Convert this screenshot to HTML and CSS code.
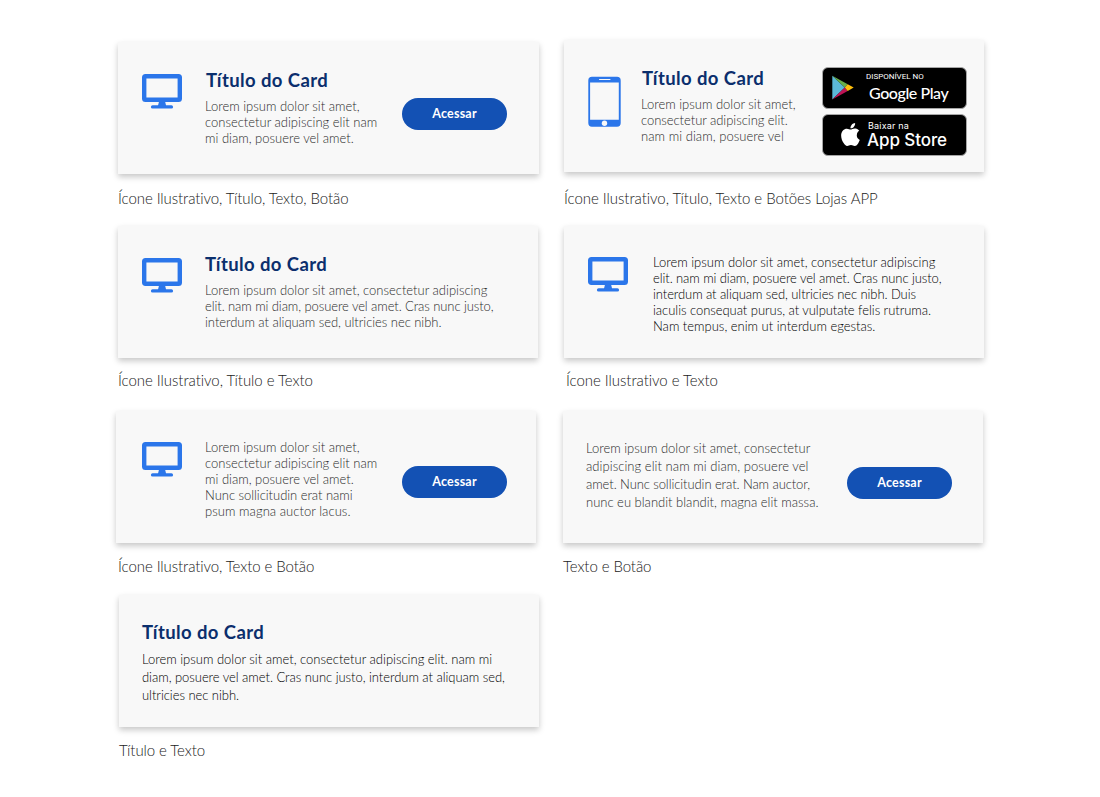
FILE: index.html
```
<!DOCTYPE html>
<html lang="pt-BR">
<head>
<meta charset="utf-8">
<title>Cards</title>
<link rel="stylesheet" href="styles.css">
</head>
<body>
<svg class="defs" aria-hidden="true">
  <symbol id="monitor" viewBox="0 0 40 36">
    <path fill="#2b76ea" fill-rule="evenodd" d="M3.500 0h33A3.500 3.500 0 0 1 40 3.500v21a3.500 3.500 0 0 1-3.500 3.500h-33A3.500 3.500 0 0 1 0 24.500v-21A3.500 3.500 0 0 1 3.500 0zM4.400 4.400v19.200h31.200V4.400zM16.900 28h6.300l.8 3.200h5.400a1.700 1.700 0 0 1 0 3.400H10.600a1.700 1.700 0 0 1 0-3.400h5.500z"/>
  </symbol>
</svg>
<main class="gallery">
  <figure class="item item-1">
    <div class="card">
      <svg class="icon"><use href="#monitor"/></svg>
      <div class="copy">
        <h2>Título do Card</h2>
        <p><span>Lorem ipsum dolor sit amet,</span><span>consectetur adipiscing elit nam</span><span>mi diam, posuere vel amet.</span></p>
      </div>
      <a class="button">Acessar</a>
    </div>
    <figcaption>Ícone Ilustrativo, Título, Texto, Botão</figcaption>
  </figure>

  <figure class="item item-2">
    <div class="card">
      <svg class="phone" viewBox="0 0 33 51">
        <path fill="#2b76ea" fill-rule="evenodd" d="M4 .7h25a3.700 3.700 0 0 1 3.700 3.700v42.600a3.700 3.700 0 0 1-3.700 3.700H4A3.700 3.700 0 0 1 .3 47V4.400A3.700 3.700 0 0 1 4 .7zM2.100 6.500v37.300h28.700V6.500z"/>
        <path stroke="#f8f8f8" stroke-linecap="round" d="M11.500 3.500h10.500"/>
        <circle cx="16.500" cy="47.300" r="2.700" fill="#f8f8f8"/>
      </svg>
      <div class="copy">
        <h2>Título do Card</h2>
        <p><span>Lorem ipsum dolor sit amet,</span><span class="snug">consectetur adipiscing elit.</span><span class="loose">nam mi diam, posuere vel</span></p>
      </div>
      <div class="stores">
        <a class="store google">
          <svg class="play" viewBox="0 0 22 25">
            <path fill="#5bb8d8" d="M.3.700v23.800L12.800 12.600z"/>
            <path fill="#66ae4a" d="M.3.700l15.400 8.500-2.900 3.400z"/>
            <path fill="#bd1455" d="M.3 24.500l15.400-8.500-2.900-3.400z"/>
            <path fill="#fdbd0b" d="M15.700 9.200l6 3.400-6 3.400-2.900-3.400z"/>
          </svg>
          <span class="store-text"><small>DISPONÍVEL NO</small><b>Google Play</b></span>
        </a>
        <a class="store apple">
          <svg class="apple-logo" viewBox="0 0 814 1000">
            <path fill="#fff" d="M788 341c-6 4-108 62-108 190 0 148 130 200 134 202-1 3-21 72-69 142-42 61-87 123-154 123s-85-40-163-40c-76 0-103 41-165 41s-105-57-155-127C50 790 0 663 0 542c0-194 126-297 251-297 66 0 121 43 163 43 39 0 101-46 176-46 29 0 131 3 198 99zM555 159c31-37 53-88 53-139 0-7-1-14-2-20-50 2-110 34-146 76-28 32-55 83-55 135 0 8 1 16 2 18 3 1 8 2 13 2 46 0 103-31 135-72z"/>
          </svg>
          <span class="store-text"><small>Baixar na</small><b>App Store</b></span>
        </a>
      </div>
    </div>
    <figcaption>Ícone Ilustrativo, Título, Texto e Botões Lojas APP</figcaption>
  </figure>

  <figure class="item item-3">
    <div class="card">
      <svg class="icon"><use href="#monitor"/></svg>
      <div class="copy">
        <h2>Título do Card</h2>
        <p><span>Lorem ipsum dolor sit amet, consectetur adipiscing</span><span class="tight">elit. nam mi diam, posuere vel amet. Cras nunc justo,</span><span class="snug">interdum at aliquam sed, ultricies nec nibh.</span></p>
      </div>
    </div>
    <figcaption>Ícone Ilustrativo, Título e Texto</figcaption>
  </figure>

  <figure class="item item-4">
    <div class="card">
      <svg class="icon"><use href="#monitor"/></svg>
      <div class="copy strong">
        <p><span>Lorem ipsum dolor sit amet, consectetur adipiscing</span><span class="tight">elit. nam mi diam, posuere vel amet. Cras nunc justo,</span><span class="tight">interdum at aliquam sed, ultricies nec nibh. Duis</span><span class="snug">iaculis consequat purus, at vulputate felis rutruma.</span><span>Nam tempus, enim ut interdum egestas.</span></p>
      </div>
    </div>
    <figcaption>Ícone Ilustrativo e Texto</figcaption>
  </figure>

  <figure class="item item-5">
    <div class="card">
      <svg class="icon"><use href="#monitor"/></svg>
      <div class="copy">
        <p><span>Lorem ipsum dolor sit amet,</span><span>consectetur adipiscing elit nam</span><span>mi diam, posuere vel amet.</span><span class="snug">Nunc sollicitudin erat nami</span><span class="loose">psum magna auctor lacus.</span></p>
      </div>
      <a class="button">Acessar</a>
    </div>
    <figcaption>Ícone Ilustrativo, Texto e Botão</figcaption>
  </figure>

  <figure class="item item-6">
    <div class="card">
      <div class="copy airy">
        <p><span>Lorem ipsum dolor sit amet, consectetur</span><span class="loose">adipiscing elit nam mi diam, posuere vel</span><span class="tight">amet. Nunc sollicitudin erat. Nam auctor,</span><span>nunc eu blandit blandit, magna elit massa.</span></p>
      </div>
      <a class="button">Acessar</a>
    </div>
    <figcaption>Texto e Botão</figcaption>
  </figure>

  <figure class="item item-7">
    <div class="card">
      <div class="copy airy strong">
        <h2>Título do Card</h2>
        <p><span>Lorem ipsum dolor sit amet, consectetur adipiscing elit. nam mi</span><span class="snug">diam, posuere vel amet. Cras nunc justo, interdum at aliquam sed,</span><span class="snug">ultricies nec nibh.</span></p>
      </div>
    </div>
    <figcaption>Título e Texto</figcaption>
  </figure>
</main>
</body>
</html>
```
FILE: styles.css
```
* { box-sizing: border-box; }

body {
  margin: 0;
  background: #fff;
  font-family: Lato, sans-serif;
  font-variant-ligatures: none;
}

.defs { display: none; }

.gallery {
  display: grid;
  grid-template-columns: 447px 422px;
  grid-template-rows: 186px 185px 184px 184px;
  padding: 40px 0 0 116px;
}

.item { margin: 0; }

.card {
  display: flex;
  align-items: flex-start;
  width: 420px;
  height: 132px;
  padding-left: 24px;
  background: #f8f8f8;
  box-shadow: 0 3px 6px rgba(0, 0, 0, .22);
}

figcaption {
  height: 20px;
  margin-top: 13px;
  font-size: 15px;
  font-weight: 300;
  line-height: 20px;
  letter-spacing: -.08px;
  white-space: nowrap;
  color: #222;
}

.icon {
  flex: none;
  width: 40px;
  height: 36px;
  margin-top: 32px;
}

.copy {
  flex: none;
  margin-left: 23px;
  color: #2c2c2c;
}

.strong { color: #000; }

h2 {
  margin: 0;
  height: 24px;
  font-size: 18.5px;
  font-weight: 700;
  line-height: 24px;
  letter-spacing: .4px;
  color: #0b2f6d;
}

p {
  margin: 0;
  font-size: 13px;
  font-weight: 300;
  line-height: 16px;
  white-space: nowrap;
}

h2 + p { margin-top: 6px; }

p span { display: block; }

.airy p { line-height: 18px; }
.tight { letter-spacing: -.085px; }
.snug { letter-spacing: -.04px; }
.loose { letter-spacing: .05px; }

.button {
  width: 105px;
  height: 32px;
  margin: 56px 32px 0 auto;
  border-radius: 16px;
  background: #1351b4;
  color: #fff;
  font-size: 12.500px;
  font-weight: 700;
  line-height: 32px;
  letter-spacing: .2px;
  text-align: center;
}

.item-1 { padding: 2px 0 0 2px; }
.item-1 .card { width: 421px; }
.item-1 .copy { margin-top: 26px; }
.item-1 h2, .item-2 h2 { padding-left: 1px; }
.item-1 figcaption { margin-top: 14px; }

.item-2 { padding-left: 1px; }
.item-2 .copy { margin: 26px 0 0 20px; }
.item-2 figcaption { margin-top: 16px; letter-spacing: -.05px; }

.item-3 { padding-left: 2px; }
.item-3 .copy { margin-top: 26px; }
.item-3 figcaption { margin-top: 12px; letter-spacing: -.05px; }

.item-4 { padding-left: 1px; }
.item-4 .icon { margin-top: 31px; }
.item-4 .copy { margin: 28px 0 0 25px; }
.item-4 figcaption { margin: 12px 0 0 2px; letter-spacing: -.05px; }

.item-5 .card { padding-left: 26px; }
.item-5 .icon { margin-top: 31px; }
.item-5 .copy { margin-top: 28px; }
.item-5 .button { margin: 55px 29px 0 auto; }
.item-5 figcaption { margin-left: 2px; }

.item-6 .copy { margin: 28px 0 0 -1px; }
.item-6 .button { margin-right: 31px; }

.item-7 { padding-left: 3px; }
.item-7 .copy { margin: 25px 0 0 -1px; }

.phone {
  flex: none;
  width: 33px;
  height: 51px;
  margin-top: 36px;
  fill: none;
}

.stores {
  display: flex;
  flex-direction: column;
  gap: 5px;
  margin: 27px 17px 0 auto;
}

.store {
  display: flex;
  width: 145px;
  height: 42px;
  border: 1px solid #a6a6a6;
  border-radius: 6px;
  background: #000;
  color: #fff;
}

.store-text {
  display: flex;
  flex-direction: column;
  white-space: nowrap;
}

.play {
  width: 22px;
  height: 25px;
  margin: 7px 0 0 9px;
}

.google small {
  margin: 3px 0 0 12px;
  font: 400 8px/11px Roboto, sans-serif;
}

.google b {
  margin: 0 0 0 15px;
  font-size: 16px;
  font-weight: 500;
  line-height: 22px;
  letter-spacing: -.42px;
}

.apple-logo {
  width: 19px;
  height: 23px;
  margin: 8px 0 0 18px;
}

.apple small {
  margin: 5px 0 0 8px;
  font: 400 9px/11px Inter, sans-serif;
  letter-spacing: .18px;
}

.apple b {
  margin: -1px 0 0 7px;
  font: 500 17px/20px Inter, sans-serif;
  letter-spacing: -.08px;
}
```
